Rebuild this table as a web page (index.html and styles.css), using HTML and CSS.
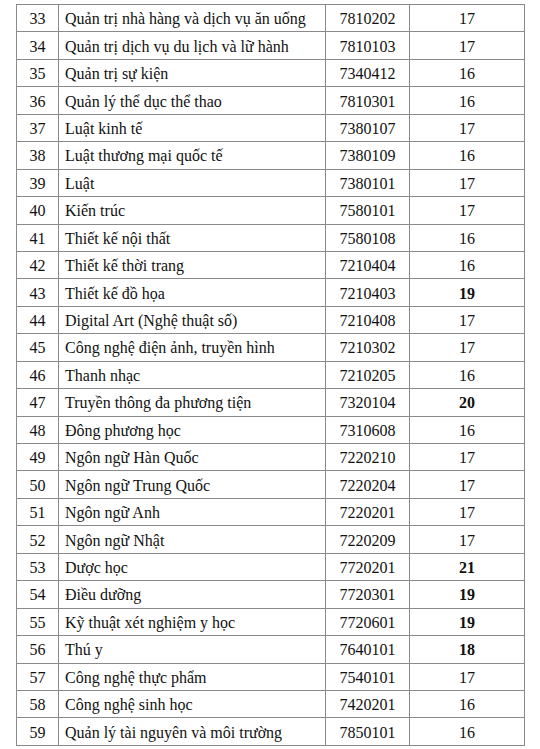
FILE: index.html
```html
<!DOCTYPE html>
<html>
<head>
<meta charset="utf-8">
<link rel="stylesheet" href="styles.css">
</head>
<body>
<table class="list">
<colgroup><col class="c-no"><col class="c-name"><col class="c-code"><col class="c-score"></colgroup>
<tbody>
<tr><td class="no">33</td><td class="name">Quản trị nhà hàng và dịch vụ ăn uống</td><td class="code">7810202</td><td class="score">17</td></tr>
<tr><td class="no">34</td><td class="name">Quản trị dịch vụ du lịch và lữ hành</td><td class="code">7810103</td><td class="score">17</td></tr>
<tr><td class="no">35</td><td class="name">Quản trị sự kiện</td><td class="code">7340412</td><td class="score">16</td></tr>
<tr><td class="no">36</td><td class="name">Quản lý thể dục thể thao</td><td class="code">7810301</td><td class="score">16</td></tr>
<tr><td class="no">37</td><td class="name">Luật kinh tế</td><td class="code">7380107</td><td class="score">17</td></tr>
<tr><td class="no">38</td><td class="name">Luật thương mại quốc tế</td><td class="code">7380109</td><td class="score">16</td></tr>
<tr><td class="no">39</td><td class="name">Luật</td><td class="code">7380101</td><td class="score">17</td></tr>
<tr><td class="no">40</td><td class="name">Kiến trúc</td><td class="code">7580101</td><td class="score">17</td></tr>
<tr><td class="no">41</td><td class="name">Thiết kế nội thất</td><td class="code">7580108</td><td class="score">16</td></tr>
<tr><td class="no">42</td><td class="name">Thiết kế thời trang</td><td class="code">7210404</td><td class="score">16</td></tr>
<tr><td class="no">43</td><td class="name">Thiết kế đồ họa</td><td class="code">7210403</td><td class="score bold">19</td></tr>
<tr><td class="no">44</td><td class="name">Digital Art (Nghệ thuật số)</td><td class="code">7210408</td><td class="score">17</td></tr>
<tr><td class="no">45</td><td class="name">Công nghệ điện ảnh, truyền hình</td><td class="code">7210302</td><td class="score">17</td></tr>
<tr><td class="no">46</td><td class="name">Thanh nhạc</td><td class="code">7210205</td><td class="score">16</td></tr>
<tr><td class="no">47</td><td class="name">Truyền thông đa phương tiện</td><td class="code">7320104</td><td class="score bold">20</td></tr>
<tr><td class="no">48</td><td class="name">Đông phương học</td><td class="code">7310608</td><td class="score">16</td></tr>
<tr><td class="no">49</td><td class="name">Ngôn ngữ Hàn Quốc</td><td class="code">7220210</td><td class="score">17</td></tr>
<tr><td class="no">50</td><td class="name">Ngôn ngữ Trung Quốc</td><td class="code">7220204</td><td class="score">17</td></tr>
<tr><td class="no">51</td><td class="name">Ngôn ngữ Anh</td><td class="code">7220201</td><td class="score">17</td></tr>
<tr><td class="no">52</td><td class="name">Ngôn ngữ Nhật</td><td class="code">7220209</td><td class="score">17</td></tr>
<tr><td class="no">53</td><td class="name">Dược học</td><td class="code">7720201</td><td class="score bold">21</td></tr>
<tr><td class="no">54</td><td class="name">Điều dưỡng</td><td class="code">7720301</td><td class="score bold">19</td></tr>
<tr><td class="no">55</td><td class="name">Kỹ thuật xét nghiệm y học</td><td class="code">7720601</td><td class="score bold">19</td></tr>
<tr><td class="no">56</td><td class="name">Thú y</td><td class="code">7640101</td><td class="score bold">18</td></tr>
<tr><td class="no">57</td><td class="name">Công nghệ thực phẩm</td><td class="code">7540101</td><td class="score">17</td></tr>
<tr><td class="no">58</td><td class="name">Công nghệ sinh học</td><td class="code">7420201</td><td class="score">16</td></tr>
<tr><td class="no">59</td><td class="name">Quản lý tài nguyên và môi trường</td><td class="code">7850101</td><td class="score">16</td></tr>
</tbody>
</table>
</body>
</html>
```
FILE: styles.css
```css
html, body {
  margin: 0;
  padding: 0;
  background: #ffffff;
}
body {
  padding: 4px 0 0 16px;
  font-family: "Liberation Serif", "Times New Roman", serif;
  font-size: 16px;
  color: #111;
}
.list {
  border-collapse: collapse;
  table-layout: fixed;
  width: 508px;
  font-family: "Liberation Serif", "Times New Roman", serif;
  font-size: 16px;
}
.c-no { width: 42px; }
.c-name { width: 267px; }
.c-code { width: 84px; }
.c-score { width: 115px; }
.list td {
  font-family: "Liberation Serif", "Times New Roman", serif;
  border: 1px solid #8a8a8a;
  height: 27.44px;
  padding: 2px 0 0 0;
  box-sizing: border-box;
  vertical-align: middle;
  line-height: 18px;
  white-space: nowrap;
  overflow: hidden;
}
.no, .code, .score { text-align: center; }
.list td.name { padding-left: 6px; }
.bold { font-weight: bold; }
```
